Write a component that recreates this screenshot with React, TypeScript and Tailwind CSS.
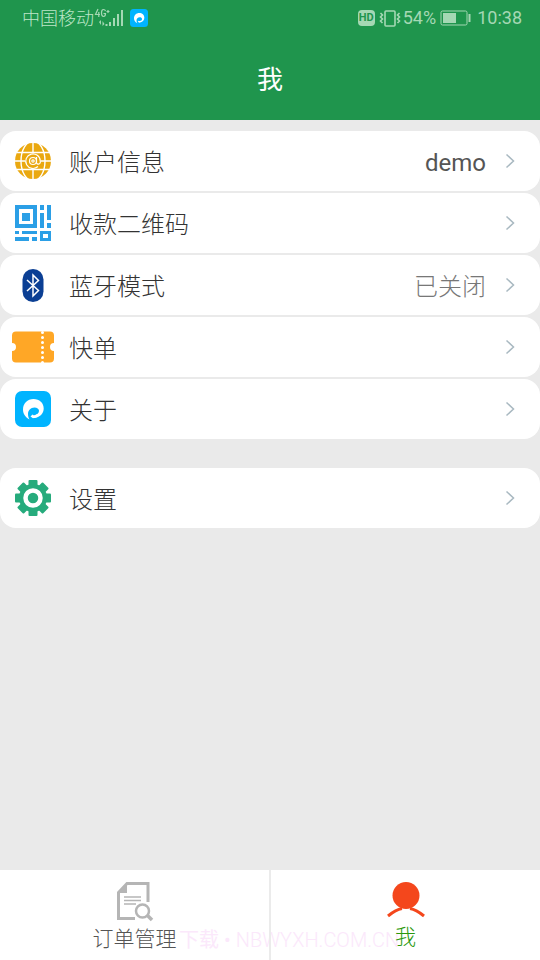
import type { ReactNode } from 'react';

const Swirl = ({ className }: { className: string }) => (
  <svg viewBox="0 0 36 36" className={className} aria-hidden="true">
    <rect width="36" height="36" rx="7" fill="#00b4ff" />
    <path
      d="M14.500 28.500C10 26 8 22.500 8 18.500C8 12.500 12.500 8 18.500 8C24.500 8 28.700 12 28.700 17.500C28.700 22.500 25 26.500 19 27L16.500 25.500L19.500 24.500C22.500 23.500 24 22 24 19.800C24 17.800 22 16.500 19.500 16.500C15.500 16.500 13 19.500 13 23C13 25 13.500 27 14.500 28.500Z"
      fill="#fff"
    />
    <path d="M15.500 25.500L17.500 23.500L19 24.500L22.500 23L22 26L18 27.200Z" fill="#fff" />
  </svg>
);

const GlobeIcon = () => (
  <svg viewBox="0 0 36 36" className="size-9" aria-hidden="true">
    <circle cx="18" cy="18" r="18" fill="#eaa80f" />
    <g fill="none" stroke="#fff" strokeWidth="1.400">
      <ellipse cx="18" cy="18" rx="12" ry="20" />
      <path d="M18 0V10M18 26V36M0 18H10M26 18H36M2 9.500H34M2 26.500H34" />
    </g>
    <circle cx="18" cy="18" r="7.800" fill="#eaa80f" />
    <g fill="none" stroke="#fff" strokeWidth="1.200">
      <path d="M23 23.500A7.300 7.300 0 1 1 25.300 18V19.500A2 2 0 0 1 21.500 20V14" />
      <circle cx="18" cy="18" r="3.500" />
      <circle cx="18" cy="18" r="1.200" />
    </g>
  </svg>
);

const QrIcon = () => (
  <svg viewBox="0 0 36 36" className="size-9" fill="#2b9fe6" aria-hidden="true">
    <path fillRule="evenodd" d="M0 0H22V23H0ZM4 4V19H18V4Z" />
    <rect x="7" y="8" width="8" height="8" />
    <path d="M25 0H29V5H25ZM32 0H36V15H32ZM25 8H29V23H25ZM32 18H36V23H32ZM0 26H4V29H0ZM7 26H22V29H7ZM0 32H14V36H0ZM17 32H22V36H17Z" />
    <path fillRule="evenodd" d="M25 26H36V36H25ZM28 29V33H33V29Z" />
  </svg>
);

const BluetoothIcon = () => (
  <svg viewBox="0 0 36 36" className="size-9" aria-hidden="true">
    <rect x="7.500" y="2" width="21" height="33" rx="10.500" fill="#0b3f94" />
    <path d="M12 13L23.500 23.500L18 29V8L23.500 13.500L12 24" fill="none" stroke="#fff" strokeWidth="1.500" />
  </svg>
);

const TicketIcon = () => (
  <svg viewBox="0 0 42 32" className="h-8 w-[42px]" aria-hidden="true">
    <path
      d="M4 0.500H38A4 4 0 0 1 42 4.500V12A4 4 0 0 0 42 20V27.500A4 4 0 0 1 38 31.500H4A4 4 0 0 1 0 27.500V20A4 4 0 0 0 0 12V4.500A4 4 0 0 1 4 0.500Z"
      fill="#ffa726"
    />
    <path d="M30.500 1.500V32" stroke="#fff" strokeWidth="3" strokeLinecap="round" strokeDasharray="0 5" />
  </svg>
);

const GearIcon = () => (
  <svg viewBox="0 0 36 36" className="size-9" fill="#26ab7c" aria-hidden="true">
    <rect x="13.500" width="9" height="36" rx="1" />
    <rect x="13.500" width="9" height="36" rx="1" transform="rotate(45 18 18)" />
    <rect x="13.500" width="9" height="36" rx="1" transform="rotate(90 18 18)" />
    <rect x="13.500" width="9" height="36" rx="1" transform="rotate(135 18 18)" />
    <circle cx="18" cy="18" r="14" />
    <circle cx="18" cy="18" r="7.500" fill="none" stroke="#fff" strokeWidth="4.500" />
  </svg>
);

const Chevron = () => (
  <svg viewBox="0 0 10 16" className="mr-[25px] ml-[19px] h-4 w-2.5 shrink-0" fill="none" stroke="#a9b9c1" strokeWidth="1.500" aria-hidden="true">
    <path d="M1.500 1.500L8.500 8L1.500 14.500" />
  </svg>
);

type RowProps = { icon: ReactNode; label: string; value?: string; valueClass?: string };

const Row = ({ icon, label, value, valueClass }: RowProps) => (
  <button type="button" className="flex h-[60px] w-full items-center rounded-2xl bg-white text-2xl font-light text-[#333]">
    <span className="flex w-[66px] shrink-0 justify-center">{icon}</span>
    <span className="ml-[3px] flex-1 pt-1 text-left">{label}</span>
    {value && <span className={valueClass}>{value}</span>}
    <Chevron />
  </button>
);

const StatusBar = () => (
  <div className="flex h-9 items-center justify-between pr-[18px] pl-[22px] text-lg text-[#a5d8b4]">
    <div className="flex items-center">
      <span className="pt-0.5 font-light text-[#bce6c8]">中国移动</span>
      <svg viewBox="0 0 32 20" className="h-5 w-8" fill="#a5d8b4" aria-hidden="true">
        <g fill="none" stroke="#a5d8b4" strokeWidth="1.200">
          <path d="M4 1L1.500 6.500H6M4.800 4V9M11.500 3Q11 1.500 9.500 1.500Q7.500 1.500 7.500 5Q7.500 8.500 9.500 8.500Q11.500 8.500 11.500 5.500H9.500M12.500 3.500H15.500M14 2V5" />
        </g>
        <path d="M7 12V17L5 14ZM8.500 13V18L10.500 16ZM11.500 16H13.500V18H11.500ZM15 14H17V18H15ZM19 10H21V18H19ZM23 6H25V18H23ZM27 2H29V18H27Z" />
      </svg>
      <Swirl className="ml-1 size-[18px]" />
    </div>
    <div className="flex items-center">
      <span className="flex h-4 w-[17px] items-center justify-center rounded-sm bg-[#a5d8b4] text-[11px] font-bold text-[#1f954d]">HD</span>
      <svg viewBox="0 0 22 18" className="ml-1 h-[18px] w-[22px]" fill="none" stroke="#a5d8b4" strokeWidth="1.600" aria-hidden="true">
        <rect x="6" y="2" width="10" height="15" rx="1" />
        <path d="M1.500 4L3.500 6L1.500 8L3.500 10L1.500 12L3.500 14M20.500 4L18.500 6L20.500 8L18.500 10L20.500 12L18.500 14" />
      </svg>
      <span className="ml-0.5">54%</span>
      <svg viewBox="0 0 31 16" className="mr-1.5 ml-1 h-4 w-[31px]" fill="#a5d8b4" aria-hidden="true">
        <rect x="1" y="1" width="26" height="14" rx="1.500" fill="none" stroke="#a5d8b4" />
        <path d="M3 3H16V13H3ZM28.500 4H30.500V12H28.500Z" />
      </svg>
      <span>10:38</span>
    </div>
  </div>
);

export default function App() {
  return (
    <div className="flex min-h-screen flex-col bg-[#eaeaea] font-['Roboto','Noto_Sans_CJK_SC',sans-serif]">
      <header className="bg-[#1f954d]">
        <StatusBar />
        <h1 className="flex h-[84px] items-center justify-center pt-1 text-[26px] text-white">我</h1>
      </header>

      {/* Menu */}
      <main className="flex-1 pt-[11px]">
        <div className="flex flex-col gap-0.5">
          <Row icon={<GlobeIcon />} label="账户信息" value="demo" valueClass="pt-1 font-normal text-[#555]" />
          <Row icon={<QrIcon />} label="收款二维码" />
          <Row icon={<BluetoothIcon />} label="蓝牙模式" value="已关闭" valueClass="pt-1 text-[#777]" />
          <Row icon={<TicketIcon />} label="快单" />
          <Row icon={<Swirl className="size-9" />} label="关于" />
        </div>
        <div className="mt-[29px]">
          <Row icon={<GearIcon />} label="设置" />
        </div>
      </main>

      {/* Bottom tabs */}
      <nav className="relative flex h-[90px] bg-white text-[21px] font-light">
        <p className="pointer-events-none absolute bottom-1.5 left-[179px] text-xl font-normal whitespace-nowrap text-[#fbe8fb]">
          下载 • <span className="font-light">NBWYXH.COM.CN</span>
        </p>
        <a href="#orders" className="relative flex flex-1 flex-col items-center border-r-2 border-[#ebebeb] pt-3 text-[#555]">
          <svg viewBox="0 0 38 40" className="h-10 w-[38px]" fill="none" stroke="#b5b5b5" aria-hidden="true">
            <path d="M32 20V1.500H11L2.500 10.500V36.500H19" strokeWidth="3" />
            <path d="M11 1V11H2Z" fill="#b5b5b5" stroke="none" />
            <path d="M8 15H25M8 18.500H25M8 22H20" strokeWidth="1.500" />
            <circle cx="26.500" cy="29" r="6.500" strokeWidth="2.500" />
            <path d="M31.500 33.500L36 38" strokeWidth="3.500" />
          </svg>
          <span className="leading-[34px]">订单管理</span>
        </a>
        <a href="#me" aria-current="page" className="relative flex flex-1 flex-col items-center pt-3 text-[#2a990c]">
          <svg viewBox="0 0 38 40" className="h-10 w-[38px]" aria-hidden="true">
            <circle cx="19" cy="13.500" r="13.500" fill="#f4471c" />
            <path d="M1 34Q9 27.500 15 26.500M37 34Q29 27.500 23 26.500" fill="none" stroke="#f4471c" strokeWidth="3" />
          </svg>
          <span className="leading-[30px]">我</span>
        </a>
      </nav>
    </div>
  );
}
